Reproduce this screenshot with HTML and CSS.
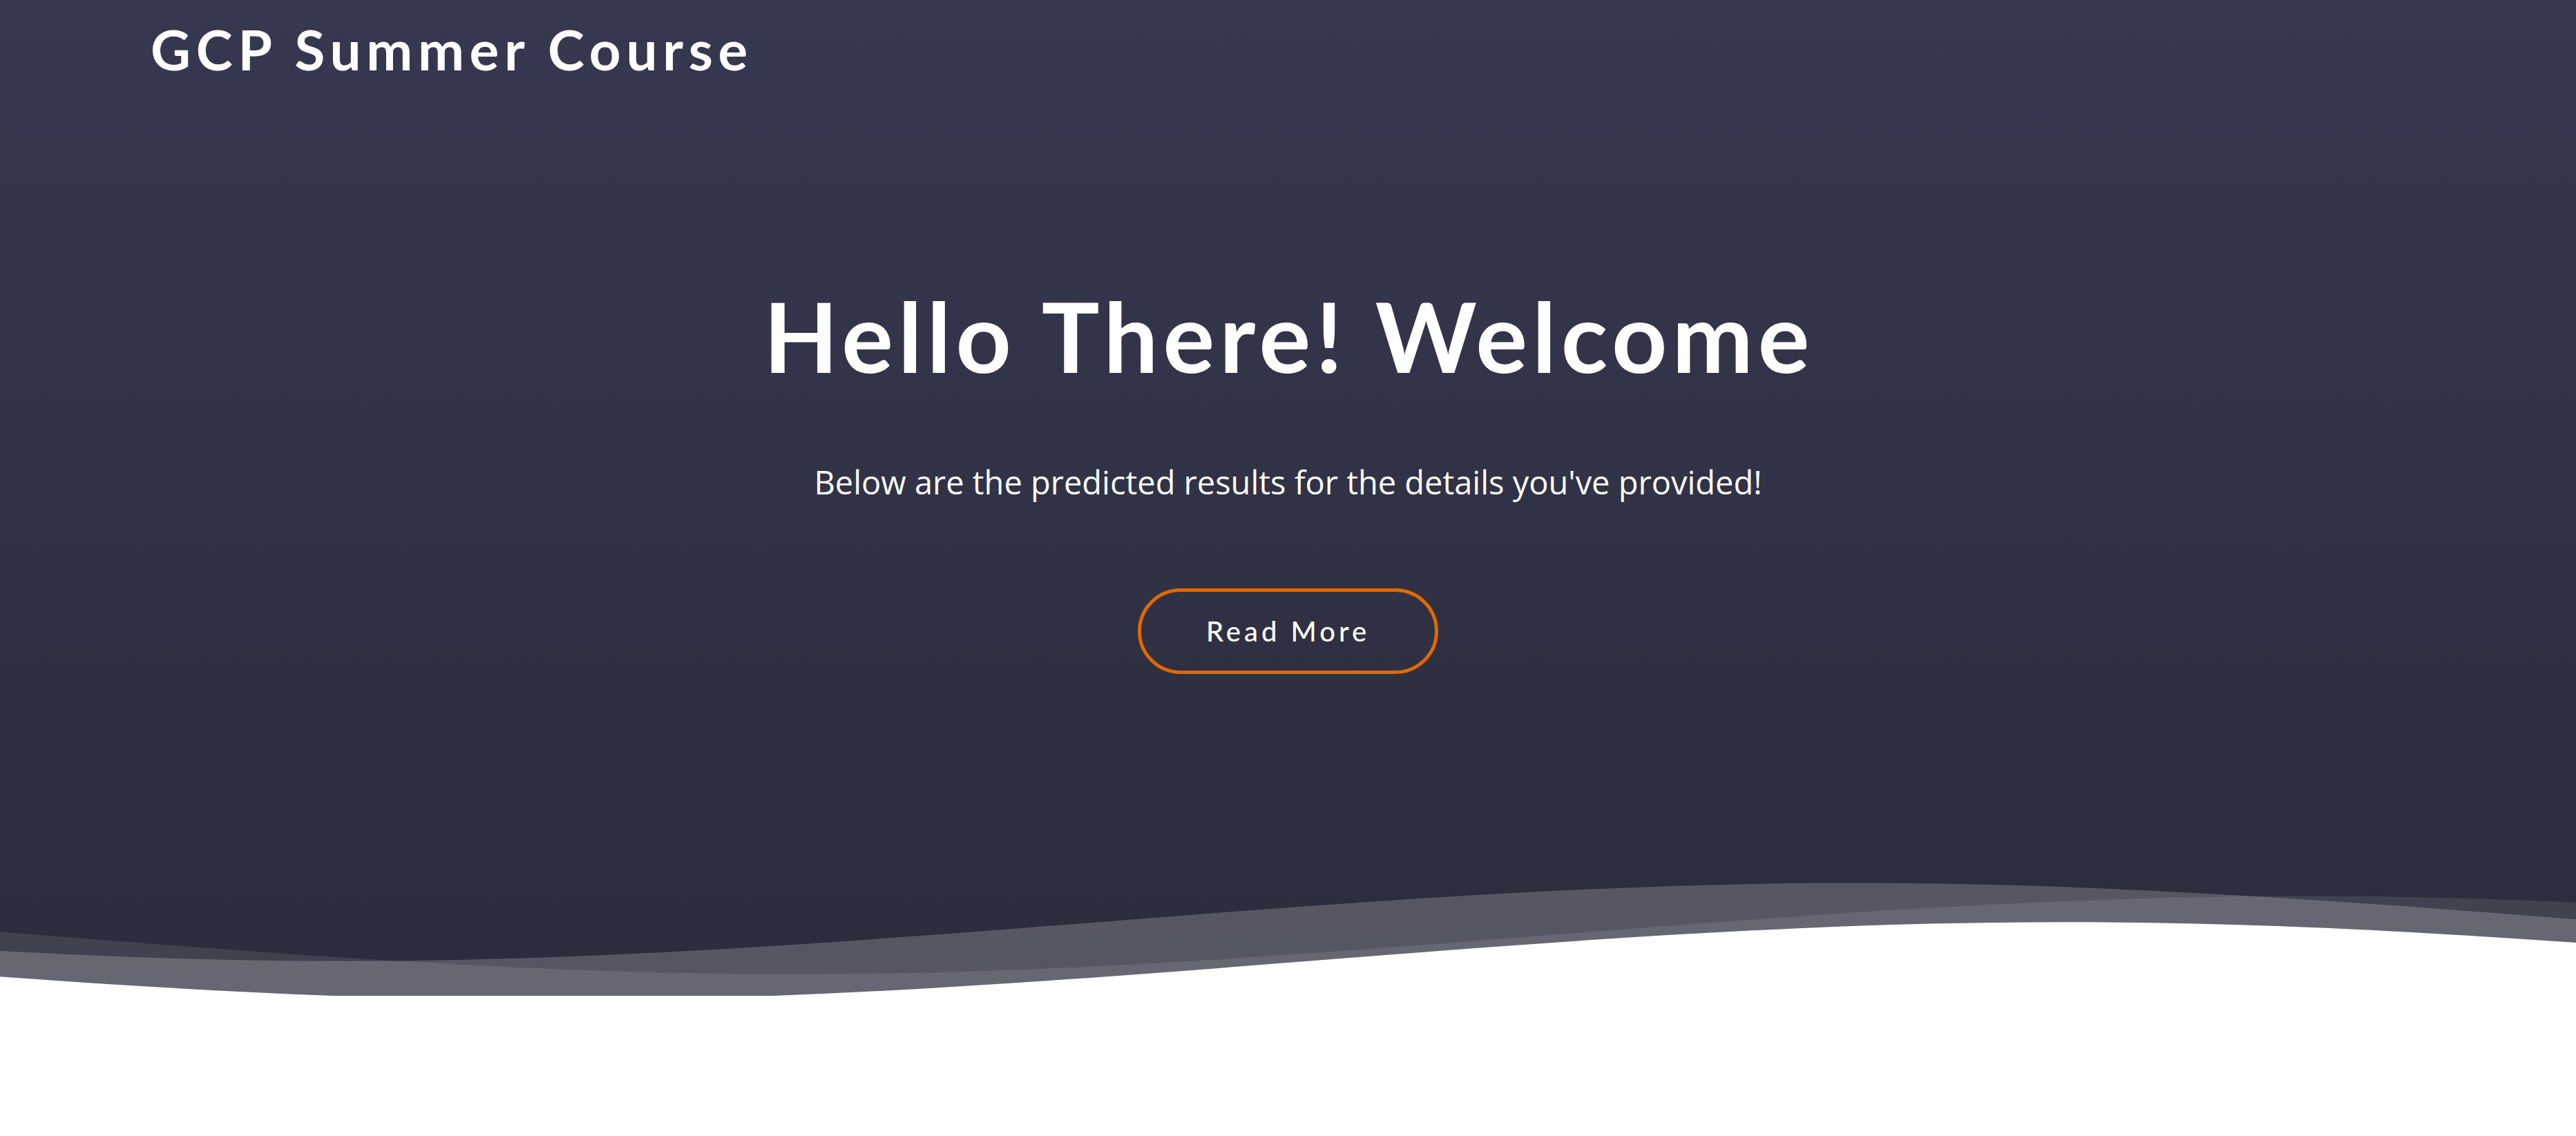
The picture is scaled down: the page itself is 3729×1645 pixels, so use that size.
FILE: index.html
```html
<!DOCTYPE html>
<html lang="en">
<head>
<meta charset="utf-8">
<title>GCP Summer Course</title>
<link rel="stylesheet" href="styles.css">
</head>
<body>
<section class="hero">
  <header class="topbar">
    <h1 class="logo">GCP Summer Course</h1>
  </header>
  <div class="intro">
    <h2 class="intro-title">Hello There! Welcome</h2>
    <p class="intro-text">Below are the predicted results for the details you've provided!</p>
    <a class="btn-more" href="#">Read More</a>
  </div>
  <svg class="hero-waves" viewBox="0 24 150 28" preserveAspectRatio="none" xmlns="http://www.w3.org/2000/svg">
    <defs>
      <path id="wave-path" d="M-160 44c30 0 58-18 88-18s58 18 88 18 58-18 88-18 58 18 88 18v44h-352z"/>
    </defs>
    <use href="#wave-path" x="30.3" y="3" fill="rgba(255,255,255,0.1)"/>
    <use href="#wave-path" x="4" y="0" fill="rgba(255,255,255,0.2)"/>
    <use href="#wave-path" x="16.2" y="9" fill="#ffffff"/>
  </svg>
</section>
</body>
</html>
```
FILE: styles.css
```css
html, body {
  margin: 0;
  padding: 0;
}
body {
  font-family: "Open Sans", "Liberation Sans", sans-serif;
  background: #ffffff;
  color: #ffffff;
  min-height: 1645px;
}
.hero {
  background: linear-gradient(180deg, #363850 0%, #2b2c3b 100%);
  display: flex;
  flex-direction: column;
}
.topbar {
  padding: 21px 0 0 218px;
}
.logo {
  margin: 0;
  font-family: Lato, "Open Sans", sans-serif;
  font-weight: 700;
  font-size: 80px;
  line-height: 100px;
  letter-spacing: 7.7px;
  color: #ffffff;
}
.intro {
  display: flex;
  flex-direction: column;
  align-items: center;
  padding-top: 281px;
}
.intro-title {
  margin: 0 0 0 3px;
  font-family: Lato, "Open Sans", sans-serif;
  font-weight: 700;
  font-size: 140px;
  line-height: 168px;
  letter-spacing: 7px;
  color: #ffffff;
}
.intro-text {
  margin: 94px 0 0;
  font-family: "Open Sans", sans-serif;
  font-size: 47px;
  line-height: 69px;
  color: #ffffff;
}
.btn-more {
  margin-top: 119px;
  box-sizing: border-box;
  width: 435px;
  height: 124px;
  border: 5px solid #e26800;
  border-radius: 62px;
  display: flex;
  align-items: center;
  justify-content: center;
  font-family: Lato, "Open Sans", sans-serif;
  font-weight: 500;
  font-size: 40px;
  letter-spacing: 5px;
  color: #ffffff;
  text-decoration: none;
}
.hero-waves {
  display: block;
  width: 100%;
  height: 176px;
  margin-top: 290px;
}
```
